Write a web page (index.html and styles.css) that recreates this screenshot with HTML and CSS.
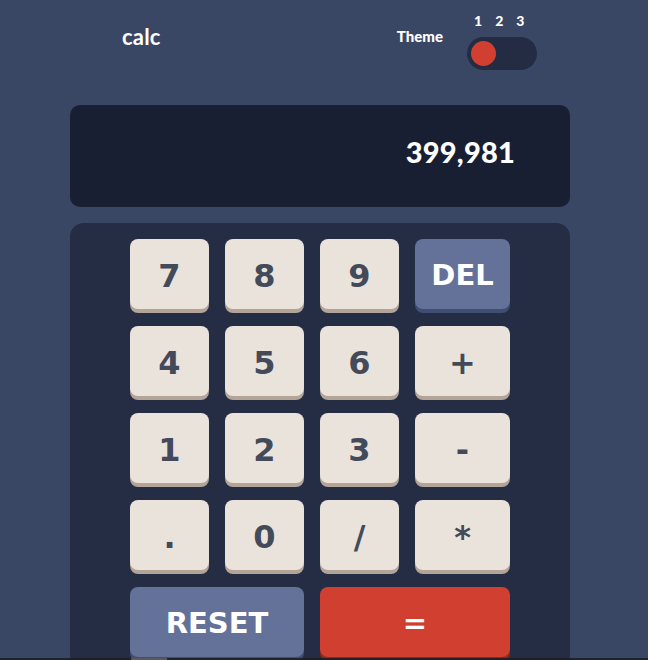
FILE: index.html
```html
<!DOCTYPE html>
<html lang="en">
<head>
<meta charset="utf-8">
<title>calc</title>
<link rel="stylesheet" href="styles.css">
</head>
<body>
<main class="calc">
  <header class="header">
    <h1 class="logo">calc</h1>
    <div class="theme">
      <span class="theme-label">Theme</span>
      <div class="theme-switch">
        <div class="theme-nums"><span>1</span><span>2</span><span>3</span></div>
        <div class="toggle"><span class="knob"></span></div>
      </div>
    </div>
  </header>
  <section class="display"><span class="value">399,981</span></section>
  <section class="keypad">
    <div class="keys">
      <button class="key">7</button>
      <button class="key">8</button>
      <button class="key">9</button>
      <button class="key key-del">DEL</button>
      <button class="key">4</button>
      <button class="key">5</button>
      <button class="key">6</button>
      <button class="key">+</button>
      <button class="key">1</button>
      <button class="key">2</button>
      <button class="key">3</button>
      <button class="key">-</button>
      <button class="key">.</button>
      <button class="key">0</button>
      <button class="key">/</button>
      <button class="key">*</button>
      <button class="key key-reset">RESET</button>
      <button class="key key-eq">=</button>
    </div>
  </section>
</main>
<div class="hscroll"><span class="hscroll-thumb"></span></div>
</body>
</html>
```
FILE: styles.css
```css
* { box-sizing: border-box; }
html, body { margin: 0; padding: 0; }
body {
  background: #3a4764;
  height: 660px;
  overflow: hidden;
  font-family: "Lato", "Open Sans", sans-serif;
}
.calc {
  width: 500px;
  margin: 0 0 0 70px;
  padding-top: 14px;
}
.header {
  display: flex;
  justify-content: space-between;
  align-items: flex-start;
  padding: 0 33px 0 52px;
  height: 91px;
}
.logo {
  margin: 12px 0 0;
  font-size: 22px;
  font-weight: 700;
  color: #fff;
  line-height: 1;
  letter-spacing: 0.2px;
}
.theme {
  display: flex;
  align-items: flex-start;
  gap: 24px;
}
.theme-label {
  margin-top: 15px;
  font-size: 15px;
  font-weight: 900;
  color: #fff;
  line-height: 1;
}
.theme-switch {
  display: flex;
  flex-direction: column;
  gap: 9px;
}
.theme-nums {
  display: flex;
  gap: 13px;
  padding-left: 7px;
  font-size: 14px;
  font-weight: 900;
  color: #fff;
  line-height: 1;
}
.toggle {
  width: 70px;
  height: 33px;
  border-radius: 17px;
  background: #232c43;
  display: flex;
  align-items: center;
  padding-left: 4px;
}
.knob {
  width: 25px;
  height: 25px;
  border-radius: 50%;
  background: #d03f2f;
}
.display {
  height: 102px;
  border-radius: 10px;
  background: #181f33;
  display: flex;
  align-items: center;
  justify-content: flex-end;
  padding: 0 55px 10px 0;
}
.value {
  font-size: 29px;
  font-weight: 900;
  color: #fff;
  letter-spacing: 0.2px;
}
.keypad {
  margin-top: 16px;
  background: #242d44;
  border-radius: 14px;
  padding: 16px 60px 40px;
}
.keys {
  display: grid;
  grid-template-columns: 79px 79px 79px 95px;
  grid-auto-rows: 70px;
  column-gap: 16px;
  row-gap: 17px;
}
.key {
  border: 0;
  border-radius: 8px;
  background: #eae3dc;
  box-shadow: 0 4px 0 #b3a497;
  color: #434a59;
  font-family: "DejaVu Sans", Verdana, sans-serif;
  font-weight: 700;
  font-size: 32px;
  padding: 3px 0 0;
  line-height: 1;
}
.key-del {
  background: #647198;
  box-shadow: 0 4px 0 #414e73;
  color: #fff;
  font-size: 29px;
}
.key-reset {
  grid-column: span 2;
  background: #647198;
  box-shadow: 0 4px 0 #414e73;
  color: #fff;
  font-size: 29px;
}
.key-eq {
  grid-column: span 2;
  background: #d03f2f;
  box-shadow: 0 4px 0 #93261a;
  color: #fff;
  font-size: 29px;
}
.hscroll {
  position: fixed;
  left: 0;
  right: 0;
  bottom: 0;
  height: 2px;
  background: rgba(30, 30, 34, 0.9);
}
.hscroll-thumb {
  position: absolute;
  left: 131px;
  width: 36px;
  top: 0;
  bottom: 0;
  background: #5a5a5e;
}
```
